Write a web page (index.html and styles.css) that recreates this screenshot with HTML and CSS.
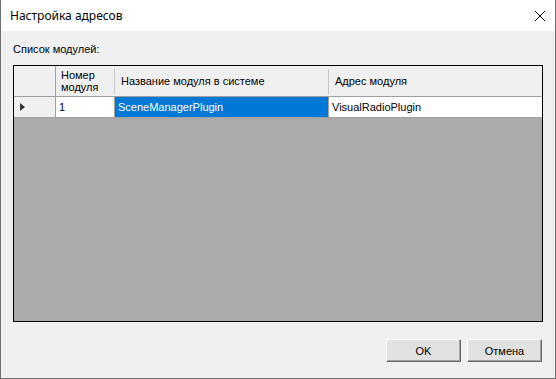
FILE: index.html
```html
<!DOCTYPE html>
<html lang="ru">
<head>
  <meta charset="UTF-8" />
  <title>Настройка адресов</title>
  <link rel="stylesheet" href="styles.css">
</head>
<body>
  <div class="window">
    <div class="titlebar">
      <span class="title">Настройка адресов</span>
      <svg class="close" width="12" height="12" viewBox="0 0 12 12">
        <path d="M1 1 L11 11 M11 1 L1 11" stroke="#000" stroke-width="1" fill="none" />
      </svg>
    </div>

    <div class="client">
      <div class="caption">Список модулей:</div>

      <div class="grid">
        <div class="row head">
          <div class="cell rowhead"></div>
          <div class="cell c1"><span class="sep"></span>Номер<br>модуля</div>
          <div class="cell c2"><span class="sep"></span>Название модуля в системе</div>
          <div class="cell c3"><span class="sep"></span>Адрес модуля</div>
        </div>
        <div class="row data">
          <div class="cell rowhead"><span class="arrow"></span></div>
          <div class="cell c1">1</div>
          <div class="cell c2 selected">SceneManagerPlugin</div>
          <div class="cell c3">VisualRadioPlugin</div>
        </div>
      </div>

      <div class="buttons">
        <button class="btn">OK</button>
        <button class="btn">Отмена</button>
      </div>
    </div>
  </div>
</body>
</html>
```

FILE: styles.css
```css
* {
  margin: 0;
  padding: 0;
  box-sizing: border-box;
}
body {
  width: 556px;
  height: 379px;
  overflow: hidden;
  font-family: 'Liberation Sans', Arial, sans-serif;
  font-size: 11px;
  color: #000;
}
.window {
  width: 556px;
  height: 379px;
  display: flex;
  flex-direction: column;
  background: #f0f0f0;
  border: 1px solid #707070;
  border-top: none;
}
.titlebar {
  height: 31px;
  background: #fff;
  display: flex;
  align-items: center;
  justify-content: space-between;
  padding: 0 8px 0 9px;
}
.title {
  font-family: 'Noto Sans', sans-serif;
  font-size: 12px;
  margin-top: -1px;
}
.close {
  margin-right: 1px;
}
.client {
  flex: 1;
  display: flex;
  flex-direction: column;
  padding: 12px 12px 0 12px;
}
.caption {
  height: 22px;
}
.grid {
  width: 530px;
  height: 257px;
  border: 1px solid #000;
  background: #ababab;
}
.row {
  display: flex;
}
.cell {
  position: relative;
  border-right: 1px solid #a0a0a0;
  border-bottom: 1px solid #a0a0a0;
  background: #fff;
  padding-left: 3px;
  display: flex;
  align-items: center;
}
.head .cell {
  height: 31px;
  background: #f0f0f0;
  border-right: none;
  padding-left: 6px;
  line-height: 12px;
}
.head .rowhead {
  border-right: 1px solid #a0a0a0;
}
.data .cell {
  height: 21px;
}
.rowhead {
  width: 42px;
  background: #f0f0f0;
}
.data .rowhead {
  background: #f0f0f0;
  padding-left: 4px;
}
.c1 {
  width: 59px;
}
.c2 {
  width: 214px;
}
.c3 {
  width: 213px;
  border-right: none;
}
.sep {
  position: absolute;
  left: -1px;
  top: 3px;
  bottom: 2px;
  width: 1px;
  background: #c8c8c8;
}
.head .c1 .sep {
  display: none;
}
.head .c1 {
  align-items: flex-start;
  padding-top: 3px;
  padding-left: 5px;
}
.selected {
  background: #0078d7;
  color: #fff;
}
.arrow {
  width: 0;
  height: 0;
  margin-left: 2px;
  border-top: 4px solid transparent;
  border-bottom: 4px solid transparent;
  border-left: 5px solid #333;
}
.buttons {
  display: flex;
  justify-content: flex-end;
  gap: 6px;
  margin-top: 17px;
  padding-right: 1px;
}
.btn {
  width: 75px;
  height: 23px;
  font-family: 'Liberation Sans', Arial, sans-serif;
  font-size: 11px;
  font-weight: normal;
  background: #e1e1e1;
  border: 1px solid;
  border-color: #fff #696969 #696969 #fff;
  box-shadow: inset -1px -1px 0 #a0a0a0, inset 1px 1px 0 #e3e3e3;
  color: #000;
}
```
